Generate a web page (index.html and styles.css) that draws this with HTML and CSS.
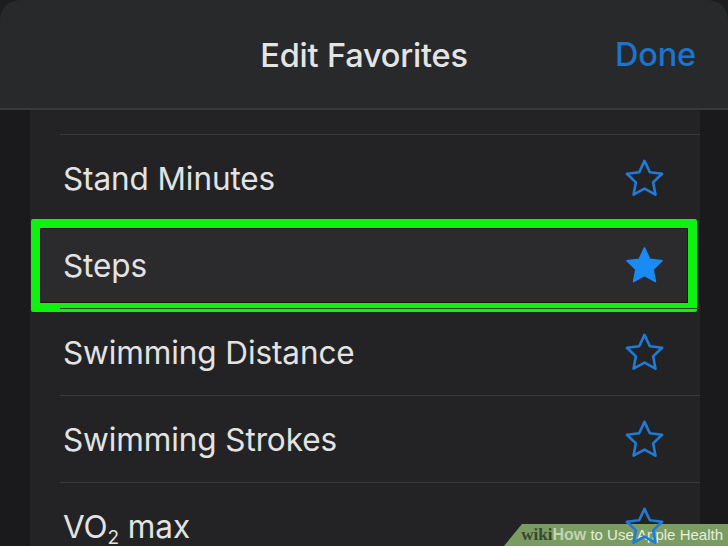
FILE: index.html
```html
<!DOCTYPE html>
<html>
<head>
<meta charset="utf-8">
<link rel="stylesheet" href="styles.css">
</head>
<body>
<div class="screen">
  <header class="nav">
    <div class="nav-title">Edit Favorites</div>
    <div class="nav-done">Done</div>
  </header>
  <div class="content">
    <div class="panel">
      <div class="row row-partial"></div>
      <div class="row"><span class="label">Stand Minutes</span>
        <svg class="star" viewBox="0 0 24 24"><path class="outline" d="M12 2.6l2.85 6.05 6.55.85-4.8 4.55 1.25 6.55L12 17.35 6.15 20.6l1.25-6.55L2.6 9.5l6.55-.85z"/></svg>
      </div>
      <div class="row row-selected"><span class="label">Steps</span>
        <svg class="star" viewBox="0 0 24 24"><path class="filled" d="M12 2.6l2.85 6.05 6.55.85-4.8 4.55 1.25 6.55L12 17.35 6.15 20.6l1.25-6.55L2.6 9.5l6.55-.85z"/></svg>
      </div>
      <div class="row"><span class="label">Swimming Distance</span>
        <svg class="star" viewBox="0 0 24 24"><path class="outline" d="M12 2.6l2.85 6.05 6.55.85-4.8 4.55 1.25 6.55L12 17.35 6.15 20.6l1.25-6.55L2.6 9.5l6.55-.85z"/></svg>
      </div>
      <div class="row"><span class="label">Swimming Strokes</span>
        <svg class="star" viewBox="0 0 24 24"><path class="outline" d="M12 2.6l2.85 6.05 6.55.85-4.8 4.55 1.25 6.55L12 17.35 6.15 20.6l1.25-6.55L2.6 9.5l6.55-.85z"/></svg>
      </div>
      <div class="row"><span class="label">VO<sub>2</sub> max</span>
        <svg class="star" viewBox="0 0 24 24"><path class="outline" d="M12 2.6l2.85 6.05 6.55.85-4.8 4.55 1.25 6.55L12 17.35 6.15 20.6l1.25-6.55L2.6 9.5l6.55-.85z"/></svg>
      </div>
    </div>
  </div>
  <div class="watermark"><span class="wm-wiki">wiki</span><span class="wm-how">How</span><span class="wm-rest"> to Use Apple Health</span></div>
</div>
</body>
</html>
```
FILE: styles.css
```css
html, body {
  margin: 0;
  padding: 0;
}
body {
  width: 728px;
  height: 546px;
  overflow: hidden;
  background: #1d1d1f;
  font-family: Inter, "Noto Sans", sans-serif;
}
.screen {
  position: relative;
  width: 728px;
  height: 546px;
  display: flex;
  flex-direction: column;
}
.nav {
  height: 108px;
  flex: none;
  background: #28292b;
  border-radius: 20px 20px 0 0;
  border-bottom: 2px solid #38393b;
  display: flex;
  align-items: center;
  justify-content: center;
  position: relative;
}
.nav-title {
  color: #e4e4e4;
  font-size: 32.5px;
  font-weight: 500;
  letter-spacing: -0.2px;
  margin-top: 2px;
}
.nav-done {
  position: absolute;
  right: 32px;
  top: 35px;
  color: #1b74cf;
  font-size: 32.5px;
  font-weight: 500;
  letter-spacing: -0.2px;
}
.content {
  flex: 1;
  display: flex;
  background: #1a1a1c;
  padding: 0 28px 0 30px;
  min-height: 0;
}
.panel {
  flex: 1;
  background: #232325;
  display: flex;
  flex-direction: column;
  padding-left: 30px;
}
.row {
  height: 86px;
  flex: none;
  display: flex;
  align-items: center;
  justify-content: space-between;
  border-top: 1px solid #3a3a3c;
  padding-left: 3px;
  padding-right: 33px;
  position: relative;
}
.row-partial {
  height: 24px;
  border-top: none;
}
.label {
  color: #e3e3e3;
  font-size: 31.5px;
  font-weight: 400;
  letter-spacing: -0.1px;
  position: relative;
  z-index: 1;
}
.label sub {
  font-size: 19px;
  vertical-align: -6px;
  line-height: 0;
}
.star {
  width: 45px;
  height: 45px;
  display: block;
  position: relative;
  z-index: 1;
}
.outline {
  fill: none;
  stroke: #1f7bd6;
  stroke-width: 1.4;
  stroke-linejoin: round;
}
.filled {
  fill: #1a8af4;
  stroke: #1a8af4;
  stroke-width: 0.8;
  stroke-linejoin: round;
}
.row-selected::before {
  content: "";
  position: absolute;
  left: -29px;
  right: 3px;
  top: -3px;
  bottom: -4px;
  border: 9px solid #0ff10f;
  background: #2b2b2d;
  box-shadow: inset 0 0 0 1px #151515;
  border-radius: 2px;
  z-index: 0;
}
.watermark {
  position: absolute;
  right: 0;
  bottom: 0;
  width: 224px;
  height: 22px;
  background: #7a9c62;
  clip-path: polygon(18px 0, 100% 0, 100% 100%, 0 100%);
  display: flex;
  align-items: center;
  justify-content: flex-end;
  padding-right: 5px;
  box-sizing: border-box;
  font-size: 15px;
  line-height: 22px;
  white-space: nowrap;
}
.wm-wiki {
  font-family: "Liberation Serif", serif;
  font-weight: 700;
  color: #3a4631;
  font-size: 17px;
}
.wm-how {
  font-family: "Liberation Sans", sans-serif;
  font-weight: 700;
  color: #c3d3b3;
  font-size: 16px;
}
.wm-rest {
  font-family: "Liberation Sans", sans-serif;
  color: #e6eede;
  white-space: pre;
}
```
